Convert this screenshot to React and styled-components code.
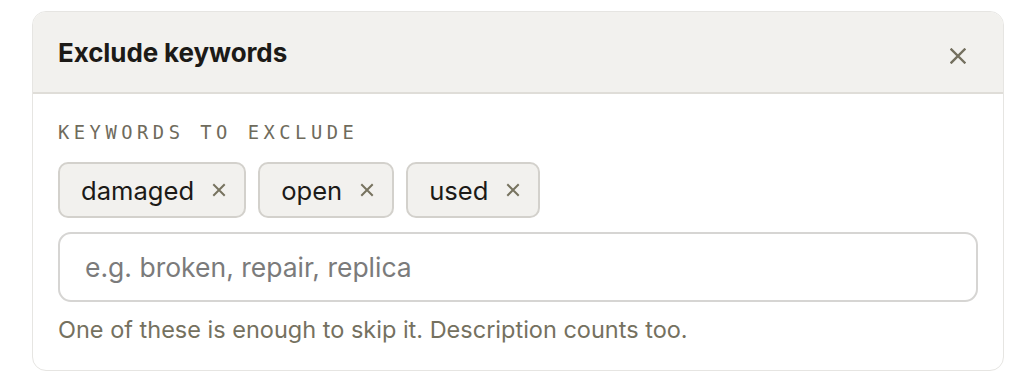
import React from "react";
import styled, { createGlobalStyle } from "styled-components";

const Global = createGlobalStyle`
  html, body { margin: 0; padding: 0; background: #ffffff; }
  body { font-family: Inter, "Noto Sans", sans-serif; -webkit-font-smoothing: antialiased; }
  * { box-sizing: border-box; }
`;

const Page = styled.div`
  padding: 11px 32px 10px;
`;

const Card = styled.section`
  border: 1px solid #e6e5e2;
  border-radius: 14px;
  overflow: hidden;
  background: #ffffff;
`;

const Header = styled.header`
  display: flex;
  align-items: center;
  justify-content: space-between;
  height: 82px;
  padding: 0 29px 0 25px;
  background: #f2f1ee;
  border-bottom: 2px solid #dfddd8;
`;

const Title = styled.h2`
  margin: 0;
  font-size: 26px;
  font-weight: 700;
  color: #1c1a17;
  letter-spacing: -0.1px;
`;

const IconButton = styled.button`
  display: flex;
  align-items: center;
  justify-content: center;
  width: 32px;
  height: 32px;
  margin-top: 7px;
  padding: 0;
  border: none;
  background: transparent;
  color: #74705f;
  cursor: pointer;
`;

const Body = styled.div`
  display: flex;
  flex-direction: column;
  padding: 29px 25px 25px;
`;

const Label = styled.div`
  font-family: "DejaVu Sans Mono", "Liberation Mono", monospace;
  font-size: 18.8px;
  letter-spacing: 4.5px;
  color: #6f6b5c;
  text-transform: uppercase;
  line-height: 20px;
`;

const Chips = styled.div`
  display: flex;
  gap: 12px;
  margin-top: 19px;
`;

const Chip = styled.span`
  display: inline-flex;
  align-items: center;
  gap: 18px;
  height: 56px;
  padding: 0 18px 0 21px;
  background: #f2f1ee;
  border: 2px solid #d3d1cc;
  border-radius: 10px;
  font-size: 25.6px;
  color: #1c1a17;
`;

const ChipX = styled.span`
  display: flex;
  color: #77735f;
`;

const Input = styled.input`
  margin-top: 14px;
  height: 70px;
  width: 100%;
  padding: 0 25px;
  border: 2px solid #d6d5d3;
  border-radius: 13px;
  font-family: Inter, "Noto Sans", sans-serif;
  font-size: 26.5px;
  color: #1c1a17;
  background: #ffffff;
  outline: none;
  &::placeholder { color: #7b7b7b; }
`;

const Help = styled.p`
  margin: 13px 0 0;
  font-size: 23.5px;
  line-height: 30px;
  color: #75715f;
`;

const Cross = ({ size, inset, stroke }) => (
  <svg width={size} height={size} viewBox={`0 0 ${size} ${size}`} fill="none">
    <path
      d={`M${inset} ${inset} L${size - inset} ${size - inset} M${size - inset} ${inset} L${inset} ${size - inset}`}
      stroke="currentColor"
      strokeWidth={stroke}
      strokeLinecap="square"
    />
  </svg>
);

const keywords = ["damaged", "open", "used"];

export default function App() {
  return (
    <Page>
      <Global />
      <Card>
        <Header>
          <Title>Exclude keywords</Title>
          <IconButton aria-label="Close"><Cross size={16} inset={1.5} stroke={2.4} /></IconButton>
        </Header>
        <Body>
          <Label>Keywords to exclude</Label>
          <Chips>
            {keywords.map((k) => (
              <Chip key={k}>
                {k}
                <ChipX><Cross size={14} inset={2} stroke={2} /></ChipX>
              </Chip>
            ))}
          </Chips>
          <Input placeholder="e.g. broken, repair, replica" />
          <Help>One of these is enough to skip it. Description counts too.</Help>
        </Body>
      </Card>
    </Page>
  );
}
